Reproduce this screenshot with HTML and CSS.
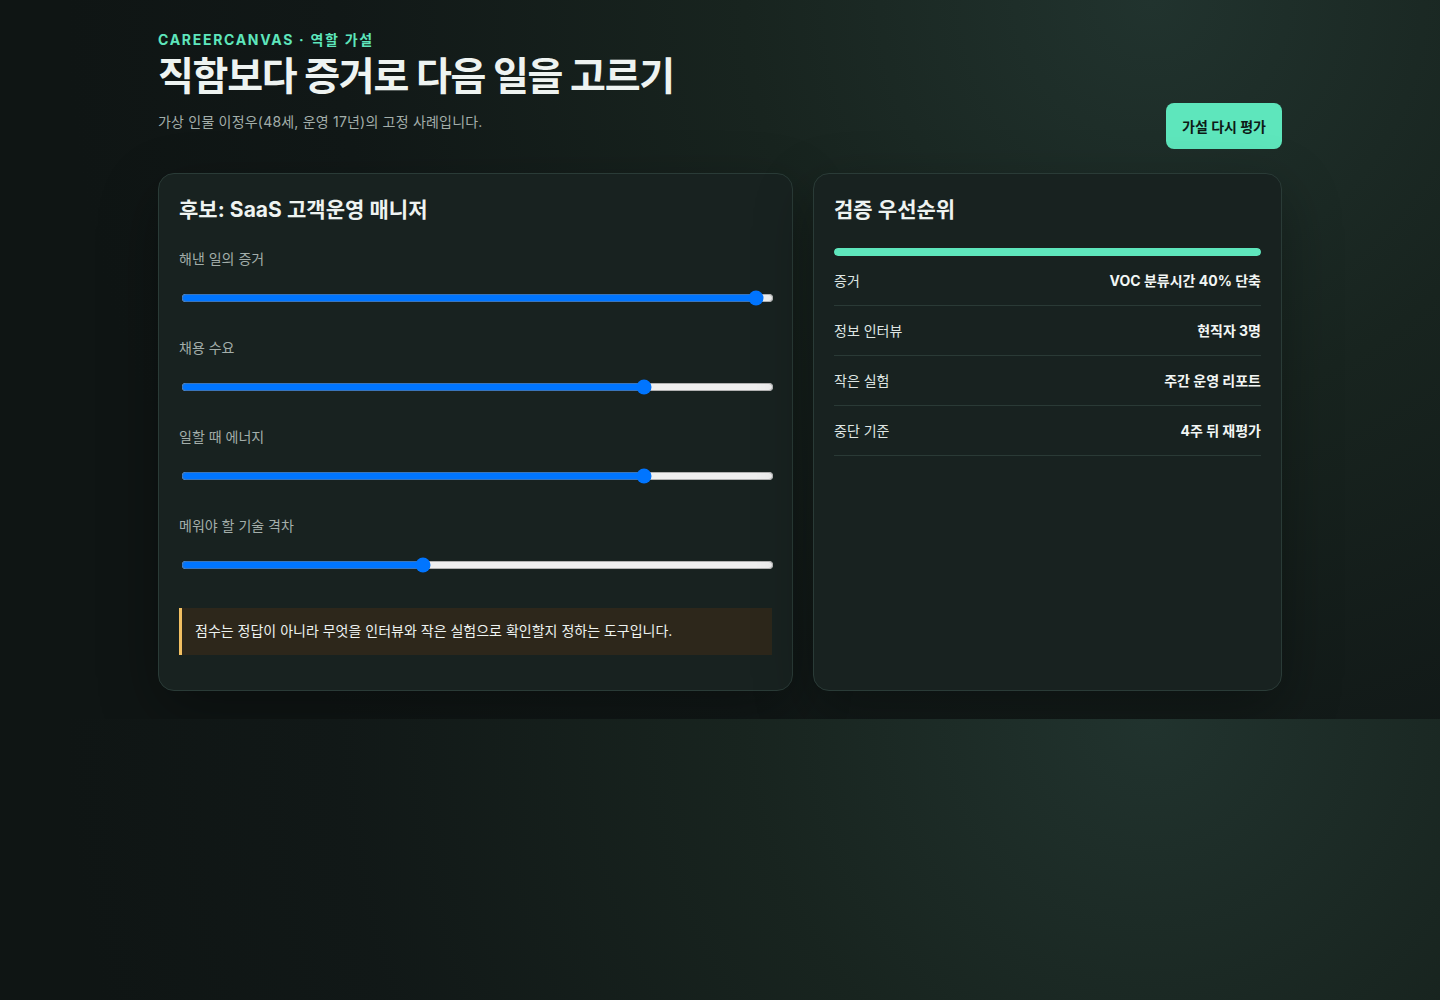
FILE: index.html
```html
<!DOCTYPE html>
<html lang="ko">
<head>
<meta charset="utf-8">
<title>CareerCanvas · 역할 가설</title>
<link rel="stylesheet" href="styles.css">
</head>
<body>
<main class="page">
  <header class="hero">
    <div class="hero-text">
      <p class="eyebrow">CAREERCANVAS · 역할 가설</p>
      <h1 class="title">직함보다 증거로 다음 일을 고르기</h1>
      <p class="lead">가상 인물 이정우(48세, 운영 17년)의 고정 사례입니다.</p>
    </div>
    <button class="btn" type="button">가설 다시 평가</button>
  </header>

  <section class="grid">
    <article class="card">
      <h2 class="card-title">후보: SaaS 고객운영 매니저</h2>
      <label class="field">
        <span class="field-label">해낸 일의 증거</span>
        <input class="range" type="range" min="0" max="100" step="any" value="98.2">
      </label>
      <label class="field">
        <span class="field-label">채용 수요</span>
        <input class="range" type="range" min="0" max="100" step="any" value="78.8">
      </label>
      <label class="field">
        <span class="field-label">일할 때 에너지</span>
        <input class="range" type="range" min="0" max="100" step="any" value="78.8">
      </label>
      <label class="field">
        <span class="field-label">메워야 할 기술 격차</span>
        <input class="range" type="range" min="0" max="100" step="any" value="40.6">
      </label>
      <p class="note">점수는 정답이 아니라 무엇을 인터뷰와 작은 실험으로 확인할지 정하는 도구입니다.</p>
    </article>

    <article class="card">
      <h2 class="card-title">검증 우선순위</h2>
      <div class="bar"><div class="bar-fill" style="width:100%"></div></div>
      <dl class="rows">
        <div class="row"><dt>증거</dt><dd>VOC 분류시간 40% 단축</dd></div>
        <div class="row"><dt>정보 인터뷰</dt><dd>현직자 3명</dd></div>
        <div class="row"><dt>작은 실험</dt><dd>주간 운영 리포트</dd></div>
        <div class="row"><dt>중단 기준</dt><dd>4주 뒤 재평가</dd></div>
      </dl>
    </article>
  </section>
</main>
</body>
</html>
```

FILE: styles.css
```css
* { box-sizing: border-box; }

body {
  margin: 0;
  font-family: "Inter", "Noto Sans CJK KR", "Noto Sans", sans-serif;
  color: #eef3f1;
  background: radial-gradient(circle at 80% 0%, #21332e 0%, #18241f 30%, #111817 60%, #0f1514 80%);
}

.page {
  max-width: 1180px;
  margin: 0 auto;
  padding: 28px;
}

.hero {
  display: flex;
  justify-content: space-between;
  align-items: flex-end;
  margin-bottom: 24px;
}

.eyebrow {
  margin: 0;
  padding-top: 2px;
  font-size: 14px;
  line-height: 20px;
  font-weight: 700;
  letter-spacing: 1.7px;
  color: #5ee6bc;
}

.title {
  margin: 2px 0 0;
  font-size: 39px;
  line-height: 48px;
  font-weight: 700;
  letter-spacing: -1.3px;
  color: #eef3f1;
}

.lead {
  margin: 12px 0 17px;
  font-size: 14px;
  line-height: 20px;
  letter-spacing: 0.2px;
  color: #a3aeaa;
}

.btn {
  height: 46px;
  padding: 0 16px;
  border: 0;
  border-radius: 8px;
  background: #5ee6bc;
  color: #0d1a16;
  font-family: inherit;
  font-size: 14px;
  font-weight: 700;
}

.grid {
  display: grid;
  grid-template-columns: minmax(0, 635fr) minmax(0, 469fr);
  gap: 20px;
}

.card {
  background: #182220;
  border: 1px solid #2a3b37;
  border-radius: 16px;
  padding: 20px 20px 35px;
  box-shadow: 0 20px 60px rgba(0, 0, 0, 0.32);
}

.card-title {
  margin: 0;
  font-size: 21px;
  line-height: 32px;
  font-weight: 700;
  letter-spacing: 0.05px;
  color: #eef3f1;
}

.field {
  display: flex;
  flex-direction: column;
  gap: 19px;
  margin-top: 23px;
}

.field + .field { margin-top: 30px; }

.field-label {
  font-size: 14px;
  line-height: 20px;
  color: #a3aeaa;
}

.range {
  width: 100%;
  margin: 2px;
}

.note {
  margin: 33px 0 0;
  padding: 13px 14px 14px 13px;
  border-left: 3px solid #f2c062;
  background: #2d271b;
  font-size: 14px;
  line-height: 20px;
  color: #eef3f1;
}

.bar {
  height: 8px;
  margin-top: 22px;
  border-radius: 4px;
  background: #24332f;
  overflow: hidden;
}

.bar-fill {
  height: 100%;
  border-radius: 4px;
  background: #5ee6bc;
}

.rows { margin: 0; }

.row {
  display: flex;
  justify-content: space-between;
  padding: 15px 0 14px;
  border-bottom: 1px solid #2a3a36;
  font-size: 14px;
  line-height: 20px;
}

.row dt { color: #dfe6e3; }

.row dd {
  margin: 0;
  font-weight: 700;
  color: #f2f6f4;
}
```
